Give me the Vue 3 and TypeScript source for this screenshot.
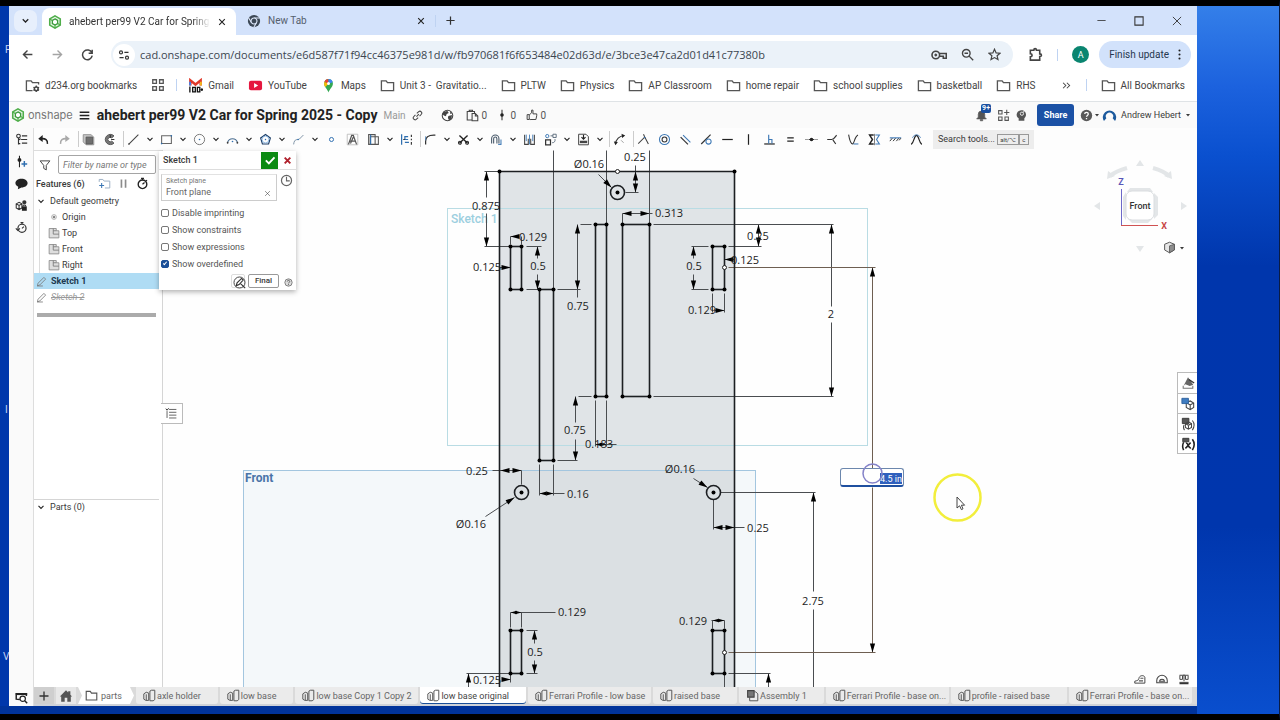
<script setup lang="ts">
import { h, ref } from 'vue'

type Shape = [d: string, stroke?: string, fill?: string, width?: number]

const K = '#3a3a3a'
const B = '#2f6fb0'
const G = '#a9a9a9'
const N = 'none'
const ring = (x: number, y: number, r: number) => `M${x - r} ${y}a${r} ${r} 0 1 0 ${2 * r} 0a${r} ${r} 0 1 0 ${-2 * r} 0`

const icons: Record<string, Shape[]> = {
  chevron: [['M4 6.2L8 10.2L12 6.2', '#222', N, 1.8]],
  caret: [['M4 6H12L8 11Z', N, K]],
  close: [['M3.5 3.5L12.5 12.5M12.5 3.5L3.5 12.5', '#222', N, 1.8]],
  plus: [['M8 2V14M2 8H14', '#333', N, 1.8]],
  min: [['M2 8H14', '#333', N, 1.2]],
  max: [['M2.5 2.5H13.5V13.5H2.5Z', '#333', N, 1.4]],
  winclose: [['M2.5 2.5L13.5 13.5M13.5 2.5L2.5 13.5', '#333', N, 1.2]],
  onshape: [
    ['M8 1L14 4.5V11.5L8 15L2 11.5V4.5Z', '#4fae4a', '#e9f7e8', 1.8],
    ['M8 4.5L11 6.2V9.8L8 11.5L5 9.8V6.2Z', '#3c9a3c', '#fff', 1.5],
    ['M2 4.5L5 6.2M11 9.8L14 11.5M8 11.5V15', '#4fae4a', N, 1.3],
  ],
  chrome: [
    [ring(8, 8, 7), N, '#3c4856'],
    ['M8 4.5H14.5M5 9.8L1.8 4.2M11 9.8L7.8 15.2', '#dfe9fb', N, 1.2],
    [ring(8, 8, 3.4), '#dfe9fb', '#3c4856', 1.3],
  ],
  back: [['M14 8H3M8 3L3 8L8 13', '#444', N, 1.7]],
  forward: [['M2 8H13M8 3L13 8L8 13', '#a4a4a4', N, 1.7]],
  reload: [['M13.4 6A6 6 0 1 0 13.8 9.5M13.8 2V6.5H9.4', '#444', N, 1.8]],
  tune: [
    [ring(4, 4.5, 2), '#333', N, 1.6],
    ['M8.5 4.5H14M2 11.5H7.5', '#333', N, 1.8],
    [ring(12, 11.5, 2), '#333', N, 1.6],
  ],
  key: [
    [ring(4.8, 8, 3.8), '#444', N, 1.6],
    [ring(4.8, 8, 1), '#444', '#444', 1],
    ['M8.5 6.5H15.3V11.3H12.3V9.3H8.5', '#444', N, 1.6],
  ],
  zoomout: [
    [ring(6.5, 6.5, 4.7), '#444', N, 1.7],
    ['M10 10L15 15M4.3 6.5H8.7', '#444', N, 1.7],
  ],
  star: [['M8 1.5L10 6L14.8 6.4L11.2 9.6L12.3 14.3L8 11.8L3.7 14.3L4.8 9.6L1.2 6.4L6 6Z', '#444', N, 1.5]],
  puzzle: [['M2.5 3.5H6.2C6.2 1.2 9 1.2 9 3.5H12.5V7.3C15 7.3 15 10.2 12.5 10.2V14H2.5V10.4C5 10.2 5 7.3 2.5 7.2Z', '#444', N, 1.7]],
  dots: [
    [ring(8, 3, 1.3), N, '#222'],
    [ring(8, 8, 1.3), N, '#222'],
    [ring(8, 13, 1.3), N, '#222'],
  ],
  folder: [['M1.5 3H6.5L8 5H14.5V13.5H1.5Z', '#555', N, 1.4]],
  folderset: [
    ['M8 13.5H1.5V3H6.5L8 5H14.5V7', '#555', N, 1.4],
    [ring(12, 11.5, 2), '#444', N, 1.6],
    ['M12 8V9.5M12 13.5V15M9 9.8L10.3 10.5M13.7 12.5L15 13.2M15 9.8L13.7 10.5M10.3 12.5L9 13.2', '#444', N, 1.3],
  ],
  apps: [['M2 2H6.2V6.2H2ZM9.8 2H14V6.2H9.8ZM2 9.8H6.2V14H2ZM9.8 9.8H14V14H9.8Z', '#555', N, 1.5]],
  gmail: [
    ['M2.5 8V2.5L8 7L13.5 2.5V8', '#e0392b', N, 2.6],
    ['M2.2 8V4', '#3f7fe8', N, 2],
    ['M13.8 8V4', '#f2b51c', N, 2],
    ['M2 9V15.5M5 10H7.8V14.7H5ZM10 10H12.6V14.7H10ZM13.6 12.3H16M14.8 10.8V13.8', '#111', N, 1.4],
  ],
  youtube: [
    ['M1 5Q1 3 3 3H13Q15 3 15 5V11Q15 13 13 13H3Q1 13 1 11Z', N, '#e5173f'],
    ['M6.5 5.4L10.8 8L6.5 10.6Z', N, '#fff'],
  ],
  maps: [
    ['M8 15.5C7 11.5 3.3 10 3.3 5.8A4.7 4.7 0 0 1 12.7 5.8C12.7 10 9 11.5 8 15.5Z', N, '#34a853'],
    ['M3.6 4.2A4.7 4.7 0 0 1 8 1V6Z', N, '#e94335'],
    ['M8 1A4.7 4.7 0 0 1 12.5 4.4L8 6Z', N, '#4285f4'],
    ['M3.6 4.2L8 6L4.6 9.6C3.5 8 3 6 3.6 4.2Z', N, '#fbbc04'],
    [ring(8, 5.8, 1.6), N, '#fff'],
  ],
  more: [['M3 4L7 8L3 12M8.5 4L12.5 8L8.5 12', '#444', N, 1.5]],
  menu: [['M1 3.2H15M1 8H15M1 12.8H15', '#222', N, 2]],
  link: [['M6.5 9.5L10 6M7 5L9.8 2.4A2.7 2.7 0 0 1 13.6 6.2L11 9M9 11L6.2 13.6A2.7 2.7 0 0 1 2.4 9.8L5 7', '#444', N, 1.5]],
  globe: [
    [ring(8, 8, 6.5), '#444', '#fff', 1.3],
    ['M3 3.5L8 2.5L9.5 5L7 6L6 9L3.5 8L1.8 6ZM9 8.5L13.5 7.5L13 11.5L10 14L8.5 11ZM11 3L13.5 5.5L11.5 6Z', N, '#444'],
  ],
  copies: [['M7.5 13.5H1.5V3H10.5V5M4 3V1.5H8V3M7.5 5.5H11.5L14.5 8.5V14.5H7.5ZM11.5 5.5V8.5H14.5', '#444', N, 1.3]],
  version: [['M8 1V15', '#333', N, 1.4], [ring(8, 8, 2.4), N, '#222']],
  thumb: [['M1.5 7.5H4.3V14H1.5ZM4.3 8L7.5 5V1.5H9.3V6.5H14.3V9L13.2 14H5.5L4.3 13', '#444', N, 1.3]],
  bell: [['M2 12.2L4 10V6.5A4 4 0 0 1 12 6.5V10L14 12.2ZM6.5 13H9.5V14.5H6.5Z', '#555', '#555', 0.8]],
  addapp: [['M2 2H6.2V6.2H2ZM2 9.8H6.2V14H2ZM9.8 9.8H14V14H9.8ZM12 1V7.5M8.8 4.2H15.2', '#555', N, 1.3]],
  head: [['M4.5 14.5V11.5C2 10 1.5 7 2.5 4.8C4.2 1 10.5 .5 12.7 4C14.3 6.8 13.6 9.5 11.5 11.5V14.5Z', N, '#555'], [ring(8.5, 5.8, 2), '#fff', N, 1], ['M9.8 4.2L12 2.2', '#fff', N, 1.2]],
  help: [[ring(8, 8, 7), N, '#5a5a5a'], ['M5.8 6.2C5.8 3.6 10.2 3.6 10.2 6.2C10.2 7.8 8 8 8 9.6M8 11V12.6', '#fff', N, 1.6]],
  helpsmall: [[ring(8, 8, 6.5), '#777', '#ddd', 1.6], ['M5.8 6.2C5.8 3.6 10.2 3.6 10.2 6.2C10.2 7.8 8 8 8 9.6M8 11V12.6', '#555', N, 1.6]],
  avatar: [['M2.8 13.2A6.3 6.3 0 1 1 13.2 13.2L11 10.5A3.5 3.5 0 1 0 5 10.5Z', N, '#1c5a9d']],
  undo: [['M12.8 13.5C13.6 8.5 10 6.5 5.5 7', '#222', N, 1.9], ['M1.5 7L7 2.5V11Z', N, '#222']],
  redo: [['M3.2 13.5C2.4 8.5 6 6.5 10.5 7', G, N, 1.9], ['M14.5 7L9 2.5V11Z', N, G]],
  block: [['M1.5 2H11L14.5 5V14.5H5L1.5 11Z', '#888', '#c4c4c4', 1], ['M5 5H13V13.5H5Z', '#555', '#6f6f6f', 1]],
  blockc: [['M13.5 3.5A6.3 6.3 0 1 0 13.5 12.5L10.8 10A2.8 2.8 0 1 1 10.8 6Z', '#555', '#777', 1.2], ['M9 2V6M14 8H10', '#333', N, 1.3]],
  line: [['M2 14L14 2', '#444', N, 1.3], [ring(2.4, 13.6, 0.9), N, K]],
  rect: [['M2 3.5H14V13H2Z', '#666', N, 1.3], [ring(2, 13, 1), N, B], [ring(14, 3.5, 1), N, B]],
  circle: [[ring(8, 8, 6.3), '#777', N, 1.2], [ring(8, 8, 1), N, B]],
  arc: [['M2 11.5A6.3 6.3 0 0 1 14 11.5', '#4a6d90', N, 1.4], [ring(8, 10.5, 1), N, B], [ring(2, 12, 1.1), N, K], [ring(14, 12, 1.1), N, K]],
  polygon: [['M8 1.8L14 6.2L11.8 13.5H4.2L2 6.2Z', '#1c3d66', N, 1.4], [ring(8, 8, 4.2), '#7fb0e0', N, 1], [ring(8, 8, 0.9), N, B]],
  spline: [['M2 14C3 6 7 9 9 7.5C11 6 12 4 14 2.5', '#7e93a6', N, 1.2], [ring(7.5, 8, 1), N, B]],
  point: [[ring(8, 8, 2.5), B, N, 1.2]],
  text: [['M1.5 1.5H14.5V14.5H1.5Z', '#b0b0b0', N, 0.9], ['M3 14L7 3H9L13 14M5 10H11M5.5 13L9 5', '#555', N, 1.5]],
  use: [['M2 2H10V14H2ZM4 4.5H14V14H4Z', '#555', N, 1.3], ['M4.5 2V14', B, N, 1.4]],
  intersect: [['M2 1.5V14.5M10 4.5H6V8H10M6 11.5H11', B, N, 1.5], ['M14 2V5M14 7V9M14 11V14.5M4 8H6', '#333', N, 1.4]],
  fillet: [['M2 14V10C2 5 6 2.5 12 2.5H14', '#333', N, 1.5], ['M2 9V4', B, N, 0.9]],
  trim: [['M3 3L13 12.5M13 3L3 12.5', '#222', N, 1.7], [ring(3.6, 12, 1.8), '#222', N, 1.3], [ring(12.4, 12, 1.8), '#222', N, 1.3]],
  offset: [['M2 13V7A4.5 4.5 0 0 1 11 7V13M4.5 13V7A2 2 0 0 1 8.5 7V13', '#456', N, 1.3], ['M13.5 8V14M10 14H14', B, N, 1.2]],
  mirror: [['M2 2V14H6.5V7M14 2V14H9.5V7', '#444', N, 1.3], ['M8 2V14M4 2V10M12 2V10', B, N, 1]],
  pattern: [['M2 8.5H8V14.5H2Z', '#333', N, 1.5], [ring(4, 3.8, 2), B, N, 1.1], ['M8 3.5H11M11 1.5H15V5.5H11ZM10 12C13 12 14 10 13.5 7.5', '#567', N, 1.1]],
  dxf: [['M2 1.5H11L14 4.5V14.5H2Z', '#444', N, 1.2], ['M8 2V7M5.5 5L8 7.5L10.5 5', '#222', N, 1.4], ['M3.5 11H12.5', '#444', N, 3]],
  dim: [['M3 13.5C3.5 8 8 3.5 13.5 3', '#333', N, 1.3], ['M1 10.5L3 15L6 11.2ZM10.5 .8L15 3L11.2 6Z', N, '#222'], ['M10 9L13 12', '#888', N, 1]],
  coincident: [['M1.5 13L9.5 5M8 1.5L9.5 5L14 13.5', '#444', N, 1.3], [ring(9.5, 5.5, 1), N, B]],
  concentric: [[ring(8, 8, 6.2), '#3d78b5', N, 1.3], [ring(8, 8, 3), '#333', N, 1.3]],
  parallel: [['M2 5L11 14', '#333', N, 1.5], ['M5 2.5L14 11.5', '#3d78b5', N, 1.3]],
  tangent: [['M1.5 13.5L13 2', '#333', N, 1.5], [ring(10.5, 10.5, 3.2), '#3d78b5', N, 1.3]],
  horizontal: [['M1.5 8H14.5', '#222', N, 1.5]],
  vertical: [['M8 1.5V14.5', '#222', N, 1.5]],
  perp: [['M1.5 13.5H14.5', '#333', N, 1.6], ['M7 13V2M7 8H11V13', '#3d78b5', N, 1.4]],
  equal: [['M4 6H12M4 10H12', '#222', N, 1.7]],
  midpoint: [['M0 8H4M12 8H16', '#999', N, 1.2], ['M4.5 8H11.5', '#333', N, 1.2], [ring(8, 8, 2.2), N, '#222']],
  normal: [['M1.5 8H7C10 8 11 5 13 2.5M8.5 8.5L12 13.5', '#333', N, 1.4]],
  pierce: [['M2 2C3 8 4.5 13.5 7 13.5C9 13 9 5 13.5 2.5', '#333', N, 1.3], ['M8 13.5H14', '#3d78b5', N, 1.3]],
  symmetric: [['M7 2.5H2L5.5 8L2 13.5H7', '#222', N, 1.8], ['M9 2.5H14L10.5 8L14 13.5H9', '#3d78b5', N, 1.3], ['M8 1V15', '#555', N, 0.9]],
  fix: [['M1 6H15', '#3d78b5', N, 1.4], ['M1 10L4 6.5M5 10L8 6.5M9 10L12 6.5M12.5 9L14.5 6.5', '#333', N, 1.2]],
  curvature: [['M1.5 14C5 12 5 3 8 3C11 3 11 12 14.5 14', '#222', N, 1.5], ['M3 6C5 1 11 1 13 6', '#3d78b5', N, 1]],
  tree: [[ring(4.3, 3.7, 2.2), '#333', N, 1.3], ['M4.3 6V14M8.5 3.5H15M7.5 8H15M8.5 12.5H15M4.3 8.5L7 7M4.3 13H6.5', '#333', N, 1.4]],
  insert: [['M5.5 1V15', '#222', N, 1.3], [ring(5.5, 6, 2.4), N, '#222'], ['M11.5 7.5V14.5M8 11H15', B, N, 1.8]],
  chat: [['M8 2C12.5 2 15.5 4.5 15.5 7.5S12.5 13 8 13L3.5 15L4 12C2 11 .5 9.5 .5 7.5C.5 4.5 3.5 2 8 2Z', N, '#222']],
  cubes: [['M1.5 6L5 4L8.5 6V11L5 13L1.5 11ZM1.5 6L5 8L8.5 6M5 8V13', '#333', N, 1.3], [ring(11.5, 4, 2.6), N, '#333'], ['M8.5 9H14.5V14.5H8.5Z', N, '#222'], ['M10 9V7.5H13V9', '#222', N, 1.2]],
  timer: [[ring(8, 9, 5.3), '#222', N, 1.7], ['M6.2 1.8H9.8M8 2V4M8 9L10.5 6.8M12.2 3.8L13.5 5', '#222', N, 1.5]],
  timerarrow: [[ring(8.6, 9, 5), '#333', N, 1.5], ['M6.8 2H10.4M8.6 2V4M8.6 9L11 7M1 9L3.5 11.5L6 9', '#333', N, 1.4]],
  eyesearch: [['M6 10.5L1.5 10V3.5H14V6', '#222', N, 1.8], ['M1 2.5H15V5H1Z', N, '#222'], [ring(9.5, 9.5, 3.3), '#222', '#fff', 1.5], ['M12 12L15 15', '#222', N, 1.8]],
  filter: [['M1.5 2.5H14.5L9.7 8.5V14.5L6.3 12.5V8.5Z', '#444', N, 1.3]],
  addfolder: [['M1.5 6V3H6L7.5 5H14.5V13.5H8.5', '#9bb0c4', N, 1.2], ['M4.5 7.5V13.5M1.5 10.5H7.5', '#3d78b5', N, 1.3]],
  pause: [['M5 2V14M11 2V14', '#8c8c8c', N, 2.4]],
  origin: [[ring(8, 8, 3.2), '#aaa', '#eee', 1.1], [ring(8, 8, 1.5), N, '#777']],
  plane: [['M1.5 2H11V5H14.5V14.5H1.5Z', '#888', '#dedede', 1.1], ['M7 2V9.5H14.5M7 5H11', '#777', N, 1.1]],
  pencil: [['M2 14.5L3 10.5L11.5 2L14 4.5L5.5 13ZM2 14.5H10', '#777', N, 1.2]],
  check: [['M2.5 8.5L6.5 12.5L14 4.5', '#fff', N, 2.6]],
  redx: [['M3 3L13 13M13 3L3 13', '#b0202c', N, 3.4]],
  clock: [[ring(8, 8, 6.2), '#666', N, 1.5], ['M8 3.5V8.5H12', '#666', N, 1.4]],
  pencilring: [[ring(8, 8, 6.8), '#444', N, 1.2], ['M4 12L5 8.5L10.5 3L12.5 5L7.5 10.5ZM9 9L15 15', '#333', N, 1.4]],
  list: [['M5 3H14M5 6.5H14M5 10H14M5 13.5H14M2.5 5V13.5', '#555', N, 1.1], ['M1 2L2.5 4L4.5 1.5', '#333', N, 1.2]],
  home: [['M1 8.5L8 1.5L10.5 4V2.5H13V6.5L15 8.5H13.5V14.5H9.5V10H6.5V14.5H2.5V8.5Z', N, '#555']],
  part: [['M1 6L4 4L7 5V14H3.5L1 12.5ZM4 6.5V13.5M8.5 2.5L10.5 1.5H14.5V13L12.5 14.5H8.5Z', '#555', N, 1.2]],
  assembly: [['M2 2H10V10H2Z', '#444', '#777', 1.3], ['M10 3.5H12L14.5 6V14.5H4.5V10', '#555', N, 1.2]],
  cone: [['M8 1.5L14 10L10 11.5L5 9.5L3 11Z', N, '#666'], ['M2.5 11V14H13.5V11', '#777', N, 1.2], ['M9 4L15 8', '#333', N, 1.5]],
  bluecube: [['M6 6.5L10.5 4.5L14.5 6.8V12L10.5 14.5L6 12ZM6 6.5L10.5 9L14.5 6.8M10.5 9V14.5', '#444', '#fff', 1.2], ['M1 1.5H8.5V7.5H1Z', '#2a5f9c', '#3f7cc0', 1]],
  varcube: [['M1.5 1.5H9V7.5H1.5Z', '#333', '#555', 1], ['M5 7.5L8.5 5.5L12 7.5V12L8.5 14L5 12ZM5 7.5L8.5 9.5L12 7.5M8.5 9.5V14M3.5 9C2.5 11 3 13.5 4 15M13 4C15.5 7 15.5 11 13 15', '#444', N, 1.2]],
  variable: [['M2 1.5H9V5.5H2Z', '#333', '#555', 1], ['M3 6C1.5 9 1.5 12 3 15M13 2.5C15.5 6 15.5 11 13 15M5.5 7C8.5 6 8 13.5 11.5 12.5M11 6.5C9 8 7.5 11 5 13', '#222', N, 1.8]],
  shaded: [['M2 4L8 1.5L14 4V11L8 14.5L2 11Z', '#555', '#e6e6e6', 1.2], ['M8 6V14.5L14 11V4Z', '#555', '#8d8d8d', 1]],
  tape: [['M1 13.5H14.5V6C14 2.5 7 2.5 6.5 7.5C6.5 9 5 10 1 11Z', '#444', N, 1.3], ['M6.5 10.5H12M8.5 7H12.5', '#555', N, 1.6]],
  protractor: [['M1 13V10A7 7 0 0 1 15 10V13ZM4.5 11A3.6 3.6 0 0 1 11.5 11Z', '#444', N, 1.4]],
  scale: [['M2 3H14M8 2V11M2.5 3.5V8.5H6V3.5M10 3.5V8.5H13.5V3.5M2 12.5H14', '#444', N, 1.3], ['M2 14H14', '#333', N, 2]],
}

const Icon = (p: { n: string; s?: number }) =>
  h(
    'svg',
    { class: 'icon', width: p.s ?? 13, height: p.s ?? 13, viewBox: '0 0 16 16', 'aria-hidden': 'true' },
    icons[p.n].map(([d, stroke, fill, w]) => h('path', { d, stroke: stroke ?? K, fill: fill ?? N, 'stroke-width': w ?? 1.2 })),
  )
Icon.props = ['n', 's']

const bookmarks = [
  ['gmail', 'Gmail'], ['youtube', 'YouTube'], ['maps', 'Maps'], ['folder', 'Unit 3 -  Gravitatio...'], ['folder', 'PLTW'],
  ['folder', 'Physics'], ['folder', 'AP Classroom'], ['folder', 'home repair'], ['folder', 'school supplies'],
  ['folder', 'basketball'], ['folder', 'RHS'],
]

/* '|' is a divider; a trailing '+' adds a drop-down arrow */
const tools = [
  'undo', 'redo', '|', 'block', 'blockc', '|', 'line+', 'rect+', 'circle+', 'arc+', 'polygon+', 'spline+', 'point', 'text', 'use+',
  'intersect', '|', 'fillet+', 'trim+', 'offset+', 'mirror', 'pattern+', 'dxf+', '|', 'dim', '|', 'coincident', 'concentric',
  'parallel', 'tangent', 'horizontal', 'vertical', 'perp', 'equal', 'midpoint', 'normal', 'pierce', 'symmetric', 'fix', 'curvature',
]

const rail = ['tree', 'insert', 'chat', 'cubes', 'timerarrow']
const planes = [['origin', 'Origin'], ['plane', 'Top'], ['plane', 'Front'], ['plane', 'Right']]
const options = ref([
  { label: 'Disable imprinting', on: false },
  { label: 'Show constraints', on: false },
  { label: 'Show expressions', on: false },
  { label: 'Show overdefined', on: true },
])
const sheets = [
  ['part', 'axle holder'], ['part', 'low base'], ['part', 'low base Copy 1 Copy 2'], ['part', 'low base original'],
  ['part', 'Ferrari Profile - low base'], ['part', 'raised base'], ['assembly', 'Assembly 1'],
  ['part', 'Ferrari Profile - base on...'], ['part', 'profile - raised base'], ['part', 'Ferrari Profile - base on...'],
]
const url = ref('cad.onshape.com/documents/e6d587f71f94cc46375e981d/w/fb970681f6f653484e02d63d/e/3bce3e47ca2d01d41c77380b')
const filter = ref('')
const dimension = ref('4.5 in')

/* Sketch geometry, in sheet units */
const slots = [
  [510, 246, 11, 43], [539, 289, 14, 171], [595, 224, 11, 172], [622, 224, 27, 172],
  [712, 246, 12, 43], [510, 630, 11, 43], [712, 630, 12, 43],
]
const corners = slots.flatMap(([x, y, w, hh]) => [[x, y], [x + w, y], [x, y + hh], [x + w, y + hh]]).concat([[499, 171], [734, 171]])
const holes = [[617, 192], [521, 492], [713, 492]]
const openPoints = [[617, 171], [724, 267], [724, 652]]
const thin = [
  'M553 150V289M606 150V224M649 150V224',
  'M484 171H499M484 246H510M486 171V197M486 213V246',
  'M510 244V236H518M521 244V236M499 267H510',
  'M526 246H541M526 289H541M537 246V258M537 274V289',
  'M580 224H591M557 289H580M577 224V297',
  'M598 174L611 187M635 165V192M625 192H638',
  'M622 224V213H652M649 213V224M653 224H833',
  'M758 224V246M728 246H761M724 259H734',
  'M691 246H708M691 289H708M693 246V258M693 274V289',
  'M712 293V312M724 293V312M714 310H724',
  'M831 224V306M831 322V396M653 396H833',
  'M578 396H591M557 460H577M575 396V422M575 439V460',
  'M595 400V446M606 400V446M595 444H616',
  'M539 464V495M553 464V495M539 493H564',
  'M492 470H521V484M485 516L514 497M693 478L707 487',
  'M713 499V529M713 527H744M720 492H815M813 492V591M813 609V687',
  'M510 627V612H555M521 612V627M526 630H537M526 673H537M534 630V643M534 660V673',
  'M466 673H510V682M468 673V687M502 679H510',
  'M711 620H724M712 620V628M724 620V628M728 673H770M768 673V687M724 673V687',
]
/* x, y of the tip, its direction in degrees (0 points up), and a scale for narrow spans */
const arrows = [
  [486, 171, 0], [486, 246, 180], [510, 236, 270], [510, 267, 90], [537, 246, 0], [537, 289, 180], [577, 224, 0], [577, 289, 180],
  [611, 187, 135], [635, 171, 0], [635, 192, 180], [622, 213, 270], [649, 213, 90], [758, 224, 0], [758, 246, 180], [724, 259, 270],
  [693, 246, 0], [693, 289, 180], [724, 310, 90], [831, 224, 0], [831, 396, 180], [872, 267, 0], [872, 652, 180],
  [575, 396, 0], [575, 460, 180], [595, 444, 270, 0.7], [606, 444, 90, 0.7], [539, 493, 270, 0.8], [553, 493, 90, 0.8],
  [500, 470, 270], [521, 470, 90], [514, 497, 57], [707, 487, 123], [713, 527, 270], [734, 527, 90], [813, 492, 0],
  [510, 612, 270, 0.7], [521, 612, 90, 0.7], [534, 630, 0], [534, 673, 180], [468, 673, 0], [768, 673, 0], [510, 679, 90],
  [712, 620, 270, 0.7], [724, 620, 90, 0.7],
]
const labels: [number, number, string][] = [
  [486, 206, '0.875'], [533, 237, '0.129'], [487, 267, '0.125'], [538, 266, '0.5'], [578, 306, '0.75'], [589, 164, 'Ø0.16'],
  [635, 157, '0.25'], [669, 213, '0.313'], [758, 236, '0.25'], [745, 260, '0.125'], [694, 266, '0.5'], [702, 310, '0.129'],
  [831, 314, '2'], [575, 430, '0.75'], [599, 444, '0.183'], [578, 494, '0.16'], [477, 471, '0.25'], [471, 524, 'Ø0.16'],
  [680, 469, 'Ø0.16'], [758, 528, '0.25'], [813, 601, '2.75'], [572, 612, '0.129'], [535, 652, '0.5'], [487, 680, '0.125'], [693, 621, '0.129'],
]
</script>

<template>
  <div class="desktop">
    <span class="scrap scrap-a">F</span>
    <span class="scrap scrap-b">I</span>
    <span class="scrap scrap-c">V</span>
    <main class="window">
      <div class="tabstrip">
        <button class="tabsearch" aria-label="Search tabs"><Icon n="chevron" :s="11" /></button>
        <div class="tab active">
          <Icon n="onshape" :s="14" />
          <span class="tabtitle fade">ahebert per99 V2 Car for Spring</span>
          <button class="plain" aria-label="Close tab"><Icon n="close" :s="10" /></button>
        </div>
        <div class="tab">
          <Icon n="chrome" :s="14" />
          <span class="tabtitle">New Tab</span>
          <button class="plain" aria-label="Close tab"><Icon n="close" :s="10" /></button>
        </div>
        <i class="bar"></i>
        <button class="plain newtab" aria-label="New tab"><Icon n="plus" :s="11" /></button>
        <div class="wincontrols">
          <button class="plain" aria-label="Minimize"><Icon n="min" :s="11" /></button>
          <button class="plain" aria-label="Maximize"><Icon n="max" :s="12" /></button>
          <button class="plain" aria-label="Close"><Icon n="winclose" :s="12" /></button>
        </div>
      </div>

      <div class="navbar">
        <button class="plain nav" aria-label="Back"><Icon n="back" /></button>
        <button class="plain nav" aria-label="Forward"><Icon n="forward" /></button>
        <button class="plain nav" aria-label="Reload"><Icon n="reload" /></button>
        <div class="address">
          <button class="siteinfo" aria-label="Site information"><Icon n="tune" :s="12" /></button>
          <input v-model="url" aria-label="Address" spellcheck="false" />
          <button class="plain" aria-label="Passwords"><Icon n="key" :s="16" /></button>
          <button class="plain" aria-label="Zoom"><Icon n="zoomout" /></button>
          <button class="plain" aria-label="Bookmark this page"><Icon n="star" /></button>
        </div>
        <button class="plain puzzle" aria-label="Extensions"><Icon n="puzzle" :s="15" /></button>
        <i class="bar"></i>
        <button class="profile" aria-label="Profile">A</button>
        <button class="update">Finish update <Icon n="dots" :s="13" /></button>
      </div>

      <nav class="bookmarks">
        <a href="#"><Icon n="folderset" :s="15" />d234.org bookmarks</a>
        <a href="#" aria-label="Apps"><Icon n="apps" :s="14" /></a>
        <i class="bar tight"></i>
        <a v-for="[icon, name] in bookmarks" :key="name" href="#"><Icon :n="icon" :s="15" />{{ name }}</a>
        <button class="plain overflow" aria-label="More bookmarks"><Icon n="more" :s="11" /></button>
        <i class="bar"></i>
        <a href="#"><Icon n="folder" :s="15" />All Bookmarks</a>
      </nav>

      <header class="doc">
        <a class="brand" href="#"><Icon n="onshape" :s="14" />onshape</a>
        <button class="plain" aria-label="Menu"><Icon n="menu" :s="11" /></button>
        <h1>ahebert per99 V2 Car for Spring 2025 - Copy</h1>
        <span class="branch">Main</span>
        <button class="plain" aria-label="Copy link"><Icon n="link" :s="11" /></button>
        <button class="plain globe" aria-label="Public"><Icon n="globe" :s="13" /></button>
        <span class="count"><Icon n="copies" :s="13" />0</span>
        <span class="count"><Icon n="version" :s="12" />0</span>
        <span class="count"><Icon n="thumb" :s="12" />0</span>
        <div class="account">
          <button class="plain bell" aria-label="Notifications"><Icon n="bell" :s="13" /><b>9+</b></button>
          <button class="plain" aria-label="App store"><Icon n="addapp" /></button>
          <button class="plain learn" aria-label="Learning"><Icon n="head" /></button>
          <button class="share">Share</button>
          <button class="plain" aria-label="Help"><Icon n="help" /><Icon n="caret" :s="8" /></button>
          <button class="plain user"><Icon n="avatar" :s="17" />Andrew Hebert<Icon n="caret" :s="8" /></button>
        </div>
      </header>

      <div class="app">
        <aside class="rail">
          <button v-for="r in rail" :key="r" class="plain" :aria-label="r"><Icon :n="r" /></button>
          <button class="plain last" aria-label="Tab manager"><Icon n="eyesearch" /></button>
        </aside>

        <div class="work">
          <div class="toolbar">
            <template v-for="(t, i) in tools" :key="i">
              <i v-if="t === '|'" class="divider"></i>
              <button v-else class="tool" :class="{ split: t.endsWith('+') }" :aria-label="t.replace('+', '')">
                <Icon :n="t.replace('+', '')" :s="13" />
                <Icon v-if="t.endsWith('+')" n="chevron" :s="10" />
              </button>
            </template>
            <button class="search">Search tools... <kbd>alt/⌥</kbd><kbd>c</kbd></button>
          </div>

          <div class="body">
            <section class="features">
              <label class="filter"><Icon n="filter" :s="12" /><input v-model="filter" placeholder="Filter by name or type" aria-label="Filter" /></label>
              <div class="fhead">
                <strong>Features (6)</strong>
                <button class="plain" aria-label="Add folder"><Icon n="addfolder" :s="13" /></button>
                <button class="plain" aria-label="Pause"><Icon n="pause" :s="11" /></button>
                <button class="plain" aria-label="Regeneration times"><Icon n="timer" :s="13" /></button>
              </div>
              <ul class="tree">
                <li><Icon n="chevron" :s="10" />Default geometry</li>
                <li v-for="[icon, name] in planes" :key="name" class="child"><Icon :n="icon" :s="12" />{{ name }}</li>
                <li class="picked"><Icon n="pencil" :s="11" />Sketch 1</li>
                <li class="dim"><Icon n="pencil" :s="11" /><s>Sketch 2</s></li>
              </ul>
              <div class="rollback"></div>
              <div class="parts"><Icon n="chevron" :s="10" />Parts (0)</div>
            </section>

            <section class="stage">
              <svg class="sheet" role="img" aria-label="Sketch 1 dimensions">
                <g transform="translate(-163 -150)">
                  <rect x="243.5" y="470.5" width="512" height="230" fill="#f4f8fa" stroke="#a3c6df" />
                  <rect x="499" y="171" width="235" height="530" fill="#e0e4e7" />
                  <rect x="499" y="471" width="235" height="230" fill="#dbe0e3" />
                  <path d="M499 470.5H734" stroke="#a3c6df" />
                  <rect x="447.5" y="208.5" width="420" height="237" fill="none" stroke="#b9dce4" />
                  <text class="plane-name sketch" x="451" y="223">Sketch 1</text>
                  <text class="plane-name" x="245" y="482">Front</text>
                  <g transform="translate(.5 .5)">
                    <path v-for="d in thin" :key="d" class="thin" :d="d" />
                    <path class="thin brown" d="M728 267H875M872 267V469M872 487V652M728 652H875" />
                    <path class="edge" d="M499 700V171H734V700" />
                    <rect v-for="s in slots" :key="s.join()" class="edge" :x="s[0]" :y="s[1]" :width="s[2]" :height="s[3]" />
                    <circle v-for="(c, i) in corners" :key="i" :cx="c[0]" :cy="c[1]" r="2" />
                    <g v-for="c in holes" :key="c.join()">
                      <circle class="edge" :cx="c[0]" :cy="c[1]" r="7" />
                      <circle :cx="c[0]" :cy="c[1]" r="2" />
                    </g>
                    <circle v-for="c in openPoints" :key="c.join()" class="open" :cx="c[0]" :cy="c[1]" r="2" />
                    <path v-for="(a, i) in arrows" :key="i" d="M0 0L2.6 9H-2.6Z" :transform="`translate(${a[0]} ${a[1]}) rotate(${a[2]}) scale(${a[3] ?? 1})`" />
                  </g>
                  <text v-for="(l, i) in labels" :key="i" class="value" :x="l[0]" :y="l[1] + 4">{{ l[2] }}</text>
                </g>
              </svg>

              <label class="dimbox"><input v-model="dimension" aria-label="Dimension" /></label>

              <svg class="pointer" aria-hidden="true">
                <g transform="translate(-163 -150)">
                  <circle cx="872.5" cy="473.5" r="9.5" fill="none" stroke="#8583c9" stroke-width="1.5" />
                  <circle cx="957.5" cy="497.5" r="23" fill="none" stroke="#f2ee3c" stroke-width="2.5" />
                  <path d="M957 497V508L959.6 505.8L961.4 509.6L963 508.8L961.4 505.2H964.6Z" fill="#fff" stroke="#444" stroke-width="1" />
                </g>
              </svg>

              <form class="dialog" @submit.prevent>
                <div class="dhead">
                  <strong>Sketch 1</strong>
                  <button class="ok" aria-label="Accept"><Icon n="check" :s="12" /></button>
                  <button type="button" class="plain" aria-label="Cancel"><Icon n="redx" :s="9" /></button>
                </div>
                <div class="dplane">
                  <div class="pick">
                    <small>Sketch plane</small>
                    <span>Front plane</span>
                    <button type="button" class="plain" aria-label="Clear"><Icon n="winclose" :s="7" /></button>
                  </div>
                  <Icon n="clock" :s="13" />
                </div>
                <label v-for="o in options" :key="o.label" class="opt"><input v-model="o.on" type="checkbox" />{{ o.label }}</label>
                <div class="dfoot">
                  <button type="button" class="sq" aria-label="Edit"><Icon n="pencilring" :s="13" /></button>
                  <button type="button" class="final">Final</button>
                  <Icon n="helpsmall" :s="9" />
                </div>
              </form>

              <button class="listtab" aria-label="Toggle list"><Icon n="list" :s="13" /></button>

              <svg class="cube" width="100" height="110" viewBox="0 0 100 110" role="img" aria-label="View cube: Front">
                <g fill="#e3e6e8">
                  <path d="M50 5L54 11H46ZM50 97L46 91H54ZM4 51L10 47V55ZM97 51L91 47V55Z" />
                  <path d="M40 33H60L63 37H37ZM64 38L68 42V60L64 64ZM38 64H62L58 68H42ZM36 37V65L33 61V42Z" />
                  <path d="M17 24L18 16L25 21ZM82 24L74 21L81 16Z" />
                </g>
                <path d="M37 13Q26 16 20 21M63 13Q74 16 79 21" fill="none" stroke="#e3e6e8" stroke-width="4" />
                <rect x="36" y="36" width="28" height="29" rx="6" fill="#fff" stroke="#dadde0" />
                <path d="M31.5 34V70" stroke="#6c68c8" />
                <path d="M31 70.5H68" stroke="#d05252" />
                <text x="50" y="54" class="face">Front</text>
                <text x="31" y="30" class="axis z">Z</text>
                <text x="74" y="74" class="axis x">X</text>
              </svg>
              <button class="plain shade" aria-label="View style"><Icon n="shaded" :s="13" /><Icon n="caret" :s="8" /></button>

              <div class="sidetabs">
                <button v-for="n in ['cone', 'bluecube', 'varcube', 'variable']" :key="n" :aria-label="n"><Icon :n="n" :s="14" /></button>
              </div>
              <div class="measure">
                <button v-for="n in ['tape', 'protractor', 'scale']" :key="n" class="plain" :aria-label="n"><Icon :n="n" :s="12" /></button>
              </div>
            </section>
          </div>

          <div class="sheets">
            <button class="add" aria-label="Add tab"><Icon n="plus" :s="12" /></button>
            <button class="home" aria-label="Home"><Icon n="home" :s="14" /></button>
            <button class="crumb"><Icon n="folder" :s="13" />parts</button>
            <button v-for="([icon, name], i) in sheets" :key="i" class="sheettab" :class="{ current: name === 'low base original' }">
              <Icon :n="icon" :s="13" />{{ name }}
            </button>
          </div>
        </div>
      </div>
    </main>
  </div>
</template>

<style>
html, body, #app { height: 100%; }
body { margin: 0; background: #000; }
</style>

<style scoped>
.desktop {
  position: relative;
  box-sizing: border-box;
  display: flex;
  min-height: 100%;
  padding: 0 82px 8px 9px;
  border-top: 6px solid #000;
  border-bottom: 6px solid #000;
  border-right: 1px solid #0a1c44;
  overflow: hidden;
  background: linear-gradient(180deg, #347fe9 0, #1c62de 80px, #0a50cf 150px, #0036ac 260px, #0036ad 520px, #0a50d0 720px);
  font-family: Roboto, "Liberation Sans", sans-serif;
  font-size: 9px;
  color: #3a3a3a;
}
.desktop::before { content: ""; position: absolute; inset: 0 auto 0 0; width: 9px; background: #0037ab; }
.desktop::after { content: ""; position: absolute; inset: auto 82px 0 0; height: 8px; background: #00339b; }
.scrap { position: absolute; left: 5px; font-size: 10px; line-height: 12px; color: #c8d6f4; z-index: 0; }
.scrap-a { top: 38px; }
.scrap-b { top: 398px; }
.scrap-c { top: 645px; left: 3px; }
.window { position: relative; z-index: 1; flex: 1; min-width: 0; display: flex; flex-direction: column; background: #fff; }
.icon { display: block; flex: none; }
button { font: inherit; color: inherit; }
.plain { display: flex; align-items: center; padding: 0; border: 0; background: none; }
.bar { width: 1px; height: 12px; background: #bfd3f2; }

.tabstrip { display: flex; align-items: center; height: 29px; background: #d3e2fb; font-size: 10px; }
.tabsearch { display: flex; align-items: center; justify-content: center; width: 23px; height: 22px; margin: 0 5px; padding: 0; border: 0; border-radius: 7px; background: #e7effc; }
.tab { display: flex; align-items: center; box-sizing: border-box; width: 194px; padding: 0 9px 0 6px; gap: 7px; height: 24px; color: #55606e; }
.tab + .tab { width: 199px; padding-left: 11px; }
.tab.active { height: 27px; align-self: flex-end; border-radius: 8px 8px 0 0; background: #fff; color: #333; }
.tabtitle { flex: 1; overflow: hidden; white-space: nowrap; }
.fade { mask-image: linear-gradient(90deg, #000 88%, transparent); }
.newtab { margin-left: 9px; }
.wincontrols { display: flex; gap: 26px; margin: 0 14px 0 auto; }

.navbar { display: flex; align-items: center; height: 39px; padding: 0 6px 0 12px; }
.nav { margin-right: 17px; }
.address { flex: 1; min-width: 0; display: flex; align-items: center; gap: 14px; height: 27px; padding: 0 12px 0 2px; border-radius: 14px; background: #ebf2f9; }
.address input { flex: 1; min-width: 0; margin-left: -9px; padding: 0; border: 0; outline: 0; background: none; font: 11px "Open Sans", sans-serif; color: #3c4650; }
.siteinfo { display: flex; align-items: center; justify-content: center; width: 22px; height: 22px; padding: 0; border: 0; border-radius: 11px; background: #fff; }
.puzzle { margin: 0 14px 0 15px; }
.profile { width: 17px; height: 17px; margin: 0 10px 0 14px; padding: 0; border: 0; border-radius: 9px; background: #0a8570; color: #fff; }
.update { display: flex; align-items: center; gap: 4px; height: 27px; padding: 0 5px 0 10px; border: 0; border-radius: 14px; background: #d2e2fb; font-size: 10px; color: #26374f; }

.bookmarks { box-sizing: border-box; display: flex; align-items: center; gap: 14px; height: 28px; padding: 0 12px 5px 16px; border-bottom: 1px solid #dfe3e6; font-size: 10px; }
.bookmarks a { display: flex; align-items: center; gap: 5px; color: #444; text-decoration: none; white-space: pre; }
.tight { margin: 0 -3px; }
.overflow { margin-left: auto; }

.doc { display: flex; align-items: center; height: 26px; padding: 0 5px 0 2px; background: #fafafa; white-space: nowrap; }
.brand { display: flex; align-items: center; gap: 3px; margin-right: 6px; color: #777; font: 11px Inter, sans-serif; text-decoration: none; }
.doc h1 { margin: 0 6px 0 7px; font: 700 14px Roboto, sans-serif; color: #222; }
.branch { margin-right: 6px; color: #999; font-size: 10px; }
.globe { margin: 0 12px 0 18px; }
.count { display: flex; align-items: center; gap: 3px; width: 30px; color: #555; font-size: 10px; }
.account { display: flex; align-items: center; margin-left: auto; }
.bell { position: relative; margin-right: 9px; }
.bell b { position: absolute; left: 6px; top: -5px; padding: 0 1px; border-radius: 2px; background: #1a4f9f; color: #fff; font-size: 7px; line-height: 9px; }
.learn { margin: 0 9px 0 5px; }
.share { width: 37px; height: 22px; margin-right: 6px; padding: 0; border: 0; border-radius: 3px; background: #1b51a5; color: #fff; font-weight: 700; }
.user { gap: 3px; }

.app { flex: 1; min-height: 0; display: flex; }
.rail { display: flex; flex-direction: column; align-items: center; gap: 9px; width: 24px; padding: 5px 0 2px; border-right: 1px solid #ddd; background: #fafafa; }
.last { margin-top: auto; }
.work { flex: 1; min-width: 0; display: flex; flex-direction: column; }
.toolbar { display: flex; align-items: center; height: 22px; padding-left: 1px; background: #fdfdfd; }
.tool { display: flex; align-items: center; flex: none; gap: 5px; width: 21px; height: 20px; padding: 0 0 0 2px; border: 0; background: none; }
.split { width: 33px; }
.divider { flex: none; width: 3px; height: 16px; background: linear-gradient(90deg, transparent 1px, #ccc 1px 2px, transparent 2px); }
.search { display: flex; align-items: center; height: 19px; margin-left: 4px; padding: 0 5px; border: 0; background: #ededed; white-space: pre; }
.search kbd { height: 9px; padding: 0 2px; border: 1px solid #999; font: 6px/9px Roboto, sans-serif; }

.body { flex: 1; min-height: 0; display: flex; }
.features { box-sizing: border-box; width: 129px; border-right: 1px solid #d5d5d5; border-top: 1px solid #ddd; white-space: nowrap; }
.filter { display: flex; align-items: center; gap: 7px; padding: 4px 6px 0 5px; }
.filter input { flex: 1; min-width: 0; box-sizing: border-box; height: 19px; padding: 0 4px; border: 1px solid #a5a5a5; border-radius: 2px; background: #fff; font: italic 9px Roboto, sans-serif; }
.filter input::placeholder { color: #777; }
.fhead { display: flex; align-items: center; gap: 7px; height: 19px; padding: 0 13px 0 2px; }
.fhead strong { margin-right: auto; font-weight: 500; }
.tree { margin: 0; padding: 0; list-style: none; }
.tree li { display: flex; align-items: center; gap: 4px; height: 16px; padding-left: 2px; }
.tree .child { gap: 2px; margin-left: 5px; padding-left: 8px; border-left: 1px solid #ddd; }
.tree .picked { background: #afdcf4; font-weight: 700; color: #1f3a50; }
.tree .dim { color: #999; font-style: italic; }
.rollback { height: 4px; margin: 8px 6px 0 3px; background: #ababab; }
.parts { display: flex; align-items: center; gap: 4px; margin: 182px 3px 0 0; padding: 2px; border-top: 1px solid #d5d5d5; }

.stage { position: relative; flex: 1; min-width: 0; background: #fefefe; }
.sheet, .pointer { position: absolute; inset: 0; width: 100%; height: 100%; }
.pointer { pointer-events: none; }
.thin { fill: none; stroke: #4a4d50; stroke-width: 1; }
.brown { stroke: #6e5f52; }
.edge { fill: none; stroke: #1c1f22; stroke-width: 1.6; }
.open { fill: #fff; stroke: #222; }
.value { font: 11px "Open Sans", sans-serif; fill: #1c1c1c; text-anchor: middle; }
.plane-name { font: 700 12px Roboto, sans-serif; fill: #4a74a8; }
.sketch { fill: #9ccfdf; font-weight: 500; }

.dimbox { position: absolute; left: 677px; top: 318px; box-sizing: border-box; display: flex; justify-content: flex-end; width: 64px; height: 19px; padding: 4px 1px 1px; border: 1px solid #6c87ad; border-bottom: 2px solid #1f4f9f; border-radius: 3px; background: #fff; }
.dimbox input { box-sizing: border-box; width: 22px; padding: 0; border: 0; outline: 0; background: #2f60bd; color: #fff; font: 9px Roboto, sans-serif; }

.dialog { position: absolute; left: -4px; top: 1px; box-sizing: border-box; width: 137px; height: 139px; background: #fff; box-shadow: 0 2px 5px rgba(0, 0, 0, .3); }
.dhead { display: flex; align-items: center; height: 18px; padding-right: 4px; border-bottom: 1px solid #ddd; }
.dhead strong { flex: 1; padding-left: 4px; font-weight: 500; }
.ok { display: flex; align-items: center; justify-content: center; width: 17px; height: 17px; margin-right: 5px; padding: 0; border: 0; background: #0b8a12; }
.dplane { display: flex; gap: 3px; padding: 4px 3px 3px 2px; }
.pick { position: relative; flex: 1; display: flex; flex-direction: column; height: 23px; padding: 2px 4px 0; border: 1px solid #ccc; border-top-color: #e2e2e2; }
.pick small { font-size: 7px; line-height: 9px; color: #777; }
.pick span { line-height: 12px; color: #666; }
.pick button { position: absolute; right: 5px; bottom: 3px; }
.opt { display: flex; align-items: center; gap: 3px; height: 17px; padding-left: 2px; color: #555; }
.opt input { appearance: none; box-sizing: border-box; display: flex; justify-content: center; width: 8px; height: 8px; margin: 0; border: 1px solid #777; border-radius: 2px; background: #fff; }
.opt input:checked { border-color: #1b4f98; background: #1b4f98; }
.opt input:checked::after { content: ""; width: 1px; height: 3px; border: solid #fff; border-width: 0 1px 1px 0; transform: rotate(40deg); }
.dfoot { display: flex; align-items: center; justify-content: flex-end; gap: 3px; height: 17px; padding-right: 3px; }
.dfoot .icon:last-child { margin: 3px 0 0 2px; }
.sq, .final { box-sizing: border-box; height: 14px; padding: 0; border: 1px solid #999; border-radius: 2px; background: #fff; font-size: 8px; font-weight: 500; line-height: 10px; }
.sq { display: flex; align-items: center; justify-content: center; width: 14px; border-color: #ddd; }
.sq .icon { margin: 0; }
.final { width: 31px; }
.listtab { position: absolute; left: -2px; top: 253px; display: flex; align-items: center; justify-content: center; width: 22px; height: 21px; padding: 0; border: 1px solid #bbb; border-left: 0; background: #fff; }
.cube { position: absolute; right: 7px; top: 5px; }
.face { font: 500 9px Roboto, sans-serif; text-anchor: middle; fill: #333; }
.axis { font: 700 9px Roboto, sans-serif; text-anchor: middle; }
.z { fill: #5a56b8; }
.x { fill: #c84848; }
.shade { position: absolute; right: 11px; top: 91px; gap: 2px; }
.sidetabs { position: absolute; right: 0; top: 222px; display: flex; flex-direction: column; border: 1px solid #bbb; border-right: 0; }
.sidetabs button { display: flex; align-items: center; justify-content: center; width: 19px; height: 20px; padding: 0; border: 0; background: #fff; }
.sidetabs button + button { border-top: 1px solid #bbb; }
.measure { position: absolute; right: 7px; bottom: 2px; display: flex; gap: 10px; }

.sheets { display: flex; gap: 2px; height: 17px; border-bottom: 2px solid #cfd2d8; background: #dadada; color: #666; overflow: hidden; }
.sheets button { display: flex; align-items: center; flex: none; padding: 0; border: 0; white-space: nowrap; }
.sheets .add { justify-content: center; width: 20px; background: #cfcfcf; }
.sheets .home { justify-content: center; width: 20px; background: #e8e8e8; }
.sheets .crumb { gap: 3px; width: 56px; padding-left: 7px; background: #fff; clip-path: polygon(0 0, 52px 0, 100% 50%, 52px 100%, 0 100%, 4px 50%); }
.sheets .sheettab { box-sizing: border-box; max-width: 123px; gap: 1px; padding: 0 17px 0 7px; border-radius: 0 0 3px 3px; background: #ebebeb; }
.sheets .current { background: #fff; color: #444; box-shadow: inset 0 -1px #1b4f98; }
</style>
